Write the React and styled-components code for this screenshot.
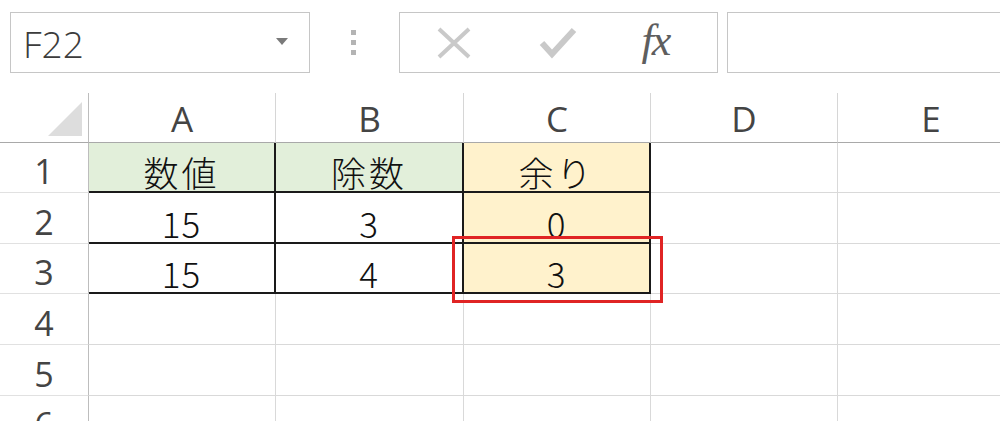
import React from "react";
import styled, { createGlobalStyle, css } from "styled-components";

const GlobalStyle = createGlobalStyle`
  html, body {
    margin: 0;
    padding: 0;
    background: #ffffff;
  }
  body {
    font-family: "Open Sans", "Noto Sans", sans-serif;
    overflow: hidden;
  }
`;

const Window = styled.div`
  width: 1000px;
  height: 421px;
  overflow: hidden;
  background: #ffffff;
`;

/* formula bar */

const FormulaBar = styled.div`
  display: flex;
  align-items: stretch;
  height: 61px;
  padding: 12px 0 0 10px;
  margin-bottom: 20px;
`;

const NameBox = styled.div`
  box-sizing: border-box;
  width: 300px;
  border: 1px solid #c6c6c6;
  display: flex;
  align-items: center;
  justify-content: space-between;
  padding: 0 21px 0 12px;
`;

const NameText = styled.span`
  font-family: "Open Sans", sans-serif;
  font-weight: 300;
  font-size: 37px;
  line-height: 1;
  color: #3c3c3c;
  margin-top: 2px;
`;

const DropArrow = styled.span`
  width: 0;
  height: 0;
  border-left: 6px solid transparent;
  border-right: 6px solid transparent;
  border-top: 7px solid #7a7a7a;
  margin-top: -2px;
`;

const Grip = styled.div`
  width: 89px;
  display: flex;
  flex-direction: column;
  align-items: center;
  justify-content: center;
  gap: 5px;
  padding-right: 2px;
  box-sizing: border-box;
`;

const GripDot = styled.span`
  width: 5px;
  height: 5px;
  background: #b4b4b4;
`;

const FxBox = styled.div`
  box-sizing: border-box;
  width: 319px;
  border: 1px solid #c6c6c6;
  display: grid;
  grid-template-columns: 108px 100px 1fr;
  align-items: center;
  justify-items: center;
`;

const FxLabel = styled.span`
  font-family: "Liberation Serif", "DejaVu Serif", serif;
  font-style: italic;
  font-size: 44px;
  line-height: 1;
  color: #5e5e5e;
  letter-spacing: -2px;
  margin-left: -14px;
  margin-top: -4px;
`;

const FormulaInput = styled.div`
  box-sizing: border-box;
  flex: 1;
  margin-left: 9px;
  margin-right: -20px;
  border: 1px solid #c6c6c6;
`;

/* sheet */

const Sheet = styled.div`
  display: grid;
  grid-template-columns: 89px 187px 188px 187px 187px 187px;
  grid-template-rows: 50px 50px 51px 50px 51px 51px 50px;
`;

const Corner = styled.div`
  box-sizing: border-box;
  border-right: 1px solid #bdbdbd;
  border-bottom: 1px solid #a9a9a9;
  display: flex;
  align-items: flex-end;
  justify-content: flex-end;
  padding: 0 6px 6px 0;
`;

const ColHeader = styled.div`
  box-sizing: border-box;
  border-right: 1px solid #d6d6d6;
  border-bottom: 1px solid #a9a9a9;
  display: flex;
  align-items: center;
  justify-content: center;
  font-family: "Open Sans", sans-serif;
  font-size: 35px;
  color: #444444;
  padding-top: 2px;
`;

const RowHeader = styled.div`
  box-sizing: border-box;
  border-right: 1px solid #bdbdbd;
  border-bottom: 1px solid #e1e1e1;
  display: flex;
  align-items: flex-end;
  justify-content: center;
  font-family: "Open Sans", sans-serif;
  font-size: 34px;
  line-height: 1;
  color: #444444;
  padding-bottom: 4px;
`;

const fills = {
  green: "#e2efda",
  yellow: "#fff2cc",
};

const Cell = styled.div`
  position: relative;
  box-sizing: border-box;
  border-right: 1px solid #d9d9d9;
  border-bottom: 1px solid #d9d9d9;
  background: ${(p) => fills[p.$fill] || "transparent"};
  display: flex;
  align-items: flex-end;
  justify-content: center;
  font-family: "Noto Sans CJK JP", "Noto Sans", sans-serif;
  font-weight: 300;
  font-size: 35px;
  line-height: 1;
  color: #111111;
  padding-bottom: 3px;
  ${(p) =>
    p.$boxed &&
    css`
      border-right: 2px solid #1a1a1a;
      border-bottom: 2px solid #1a1a1a;
      padding-bottom: 2px;
    `}
`;

const Label = styled.span`
  letter-spacing: ${(p) => (p.$wide ? "3px" : "1px")};
`;

const Highlight = styled.span`
  position: absolute;
  z-index: 2;
  top: -8px;
  left: -12px;
  right: -14px;
  bottom: -11px;
  border: 3px solid #e02424;
  pointer-events: none;
`;

const CloseIcon = () => (
  <svg width="36" height="32" viewBox="0 0 36 32">
    <path d="M3 2 L33 30 M33 2 L3 30" stroke="#c9c9c9" strokeWidth="4" fill="none" />
  </svg>
);

const CheckIcon = () => (
  <svg width="38" height="34" viewBox="0 0 38 34">
    <path d="M3 17 L13 28 L35 4" stroke="#c9c9c9" strokeWidth="6" fill="none" />
  </svg>
);

const CornerMark = () => (
  <svg width="34" height="34" viewBox="0 0 34 34">
    <path d="M34 0 L34 34 L0 34 Z" fill="#dddddd" />
  </svg>
);

const columns = ["A", "B", "C", "D", "E"];

const rows = [
  [
    { text: "数値", fill: "green", boxed: true, wide: true },
    { text: "除数", fill: "green", boxed: true, wide: true },
    { text: "余り", fill: "yellow", boxed: true, wide: true },
    {},
    {},
  ],
  [
    { text: "15", boxed: true },
    { text: "3", boxed: true },
    { text: "0", fill: "yellow", boxed: true },
    {},
    {},
  ],
  [
    { text: "15", boxed: true },
    { text: "4", boxed: true },
    { text: "3", fill: "yellow", boxed: true, marked: true },
    {},
    {},
  ],
  [{}, {}, {}, {}, {}],
  [{}, {}, {}, {}, {}],
  [{}, {}, {}, {}, {}],
];

export default function App() {
  return (
    <Window>
      <GlobalStyle />
      <FormulaBar>
        <NameBox>
          <NameText>F22</NameText>
          <DropArrow />
        </NameBox>
        <Grip>
          <GripDot />
          <GripDot />
          <GripDot />
        </Grip>
        <FxBox>
          <CloseIcon />
          <CheckIcon />
          <FxLabel>fx</FxLabel>
        </FxBox>
        <FormulaInput />
      </FormulaBar>
      <Sheet>
        <Corner>
          <CornerMark />
        </Corner>
        {columns.map((c) => (
          <ColHeader key={c}>{c}</ColHeader>
        ))}
        {rows.map((row, r) => (
          <React.Fragment key={r}>
            <RowHeader>{r + 1}</RowHeader>
            {row.map((cell, c) => (
              <Cell key={c} $fill={cell.fill} $boxed={cell.boxed}>
                {cell.text && <Label $wide={cell.wide}>{cell.text}</Label>}
                {cell.marked && <Highlight />}
              </Cell>
            ))}
          </React.Fragment>
        ))}
      </Sheet>
    </Window>
  );
}
